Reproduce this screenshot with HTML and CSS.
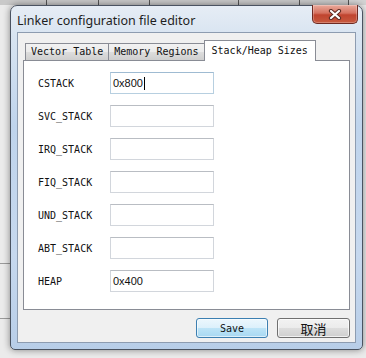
FILE: index.html
```html
<!DOCTYPE html>
<html>
<head>
<meta charset="utf-8">
<link rel="stylesheet" href="styles.css">
</head>
<body>
<div class="backdrop-top">
  <span class="seg s1"></span><span class="seg s2"></span><span class="seg s3"></span><span class="seg s4"></span><span class="seg s5"></span><span class="seg s6"></span>
</div>
<div class="window">
  <div class="titlebar">
    <span class="title">Linker configuration file editor</span>
    <div class="close">
      <svg width="16" height="11" viewBox="0 0 16 11">
        <path d="M4 2 L12 9 M12 2 L4 9" stroke="#5a2a22" stroke-width="4.2" stroke-linecap="round"/>
        <path d="M4 2 L12 9 M12 2 L4 9" stroke="#ffffff" stroke-width="2.2" stroke-linecap="round"/>
      </svg>
    </div>
  </div>
  <div class="client">
    <div class="tabs">
      <div class="tab">Vector Table</div>
      <div class="tab">Memory Regions</div>
      <div class="tab active">Stack/Heap Sizes</div>
    </div>
    <div class="panel">
      <div class="row"><span class="lbl">CSTACK</span><div class="field focus">0x800<span class="caret"></span></div></div>
      <div class="row"><span class="lbl">SVC_STACK</span><div class="field"></div></div>
      <div class="row"><span class="lbl">IRQ_STACK</span><div class="field"></div></div>
      <div class="row"><span class="lbl">FIQ_STACK</span><div class="field"></div></div>
      <div class="row"><span class="lbl">UND_STACK</span><div class="field"></div></div>
      <div class="row"><span class="lbl">ABT_STACK</span><div class="field"></div></div>
      <div class="row"><span class="lbl">HEAP</span><div class="field">0x400</div></div>
    </div>
    <div class="buttons">
      <div class="btn default">Save</div>
      <div class="btn cancel">取消</div>
    </div>
  </div>
</div>
</body>
</html>
```

FILE: styles.css
```css
html, body {
  margin: 0;
  padding: 0;
}
body {
  width: 366px;
  height: 358px;
  overflow: hidden;
  background-color: #ebebeb;
  background-image:
    linear-gradient(#9a9a9a, #9a9a9a),
    linear-gradient(#9a9a9a, #9a9a9a);
  background-repeat: no-repeat;
  background-size: 10px 1px, 10px 1px;
  background-position: 0 263px, 0 318px;
}
.backdrop-top {
  height: 5px;
  display: flex;
  background: #d4d4d4;
}
.seg {
  height: 5px;
  border-right: 1px solid #555;
  background: #c9c9c9;
}
.s1 { width: 46px; }
.s2 { width: 51px; }
.s3 { width: 50px; }
.s4 { width: 88px; }
.s5 { width: 60px; }
.s6 { width: 48px; }

.window {
  position: relative;
  margin: 0 0 0 10px;
  width: 353px;
  height: 345px;
  box-sizing: border-box;
  border: 1px solid #4a5361;
  border-radius: 7px 7px 5px 5px;
  background: linear-gradient(to bottom, #e6edf5 0px, #d8e4f1 30px, #bfd4ec 120px, #c6d8ee 250px, #b8cee8 100%);
  box-shadow: 0 0 7px rgba(0,0,0,0.45);
  padding: 0 6px 6px 6px;
}
.titlebar {
  height: 26px;
  display: flex;
  align-items: center;
}
.title {
  font-family: "Noto Sans", sans-serif;
  font-size: 12.5px;
  color: #1e1e1e;
  letter-spacing: 0;
  margin-top: 2px;
}
.close {
  position: absolute;
  top: -1px;
  right: 4px;
  width: 46px;
  height: 19px;
  box-sizing: border-box;
  border: 1px solid #6e2a22;
  border-top: none;
  border-radius: 0 0 5px 5px;
  background: linear-gradient(to bottom, #e9aa9c 0%, #d5715f 45%, #c0442f 55%, #c75a3f 100%);
  display: flex;
  align-items: center;
  justify-content: center;
  box-shadow: inset 0 0 0 1px rgba(255,255,255,0.25);
}
.client {
  height: 311px;
  box-sizing: border-box;
  border: 1px solid #8d9cb0;
  background: #f0f0f0;
  padding: 7px 0 0 5px;
}
.tabs {
  display: flex;
  align-items: flex-end;
  height: 20px;
  padding-left: 2px;
  position: relative;
  z-index: 1;
}
.tab {
  height: 17px;
  box-sizing: border-box;
  border: 1px solid #898c95;
  border-bottom: none;
  margin-right: -1px;
  padding: 0 5px 0 5px;
  background: linear-gradient(to bottom, #f2f2f2 0%, #ebebeb 50%, #dddddd 51%, #cfcfcf 100%);
  font-family: "DejaVu Sans Mono", monospace;
  font-size: 10px;
  color: #111;
  line-height: 16px;
  white-space: nowrap;
}
.tab.active {
  height: 21px;
  margin-bottom: -1px;
  padding: 0 7px 0 7px;
  background: #ffffff;
  line-height: 19px;
}
.panel {
  width: 327px;
  height: 250px;
  box-sizing: border-box;
  border: 1px solid #898c95;
  background: #ffffff;
  padding: 11px 0 0 14px;
  display: flex;
  flex-direction: column;
  gap: 11px;
}
.row {
  display: flex;
  align-items: center;
  height: 22px;
}
.lbl {
  width: 72px;
  font-family: "DejaVu Sans Mono", monospace;
  font-size: 10px;
  color: #111;
}
.field {
  width: 104px;
  height: 22px;
  box-sizing: border-box;
  border: 1px solid #d2d6dc;
  border-top-color: #b9bdc3;
  padding: 0 0 0 2px;
  display: flex;
  align-items: center;
  font-family: "Liberation Sans", sans-serif;
  font-size: 11px;
  color: #111;
}
.field.focus {
  border-color: #b7cfe0;
  border-top-color: #9fbbd2;
}
.caret {
  display: inline-block;
  width: 1px;
  height: 13px;
  background: #000;
  margin-left: 1px;
}
.buttons {
  width: 327px;
  display: flex;
  justify-content: flex-end;
  gap: 9px;
  margin-top: 8px;
}
.btn {
  height: 20px;
  box-sizing: border-box;
  border-radius: 3px;
  display: flex;
  align-items: center;
  justify-content: center;
  color: #111;
}
.btn.default {
  width: 72px;
  border: 1px solid #3c7fb1;
  background: linear-gradient(to bottom, #ecf7fd 0%, #dcf0fb 50%, #bde4f7 51%, #a8d8f2 100%);
  box-shadow: inset 0 0 0 1px rgba(255,255,255,0.6);
  font-family: "DejaVu Sans Mono", monospace;
  font-size: 10px;
}
.btn.cancel {
  width: 73px;
  border: 1px solid #707070;
  background: linear-gradient(to bottom, #f2f2f2 0%, #ebebeb 50%, #dddddd 51%, #cfcfcf 100%);
  box-shadow: inset 0 0 0 1px rgba(255,255,255,0.7);
  font-family: "Noto Sans CJK SC", sans-serif;
  font-size: 13px;
}
```
